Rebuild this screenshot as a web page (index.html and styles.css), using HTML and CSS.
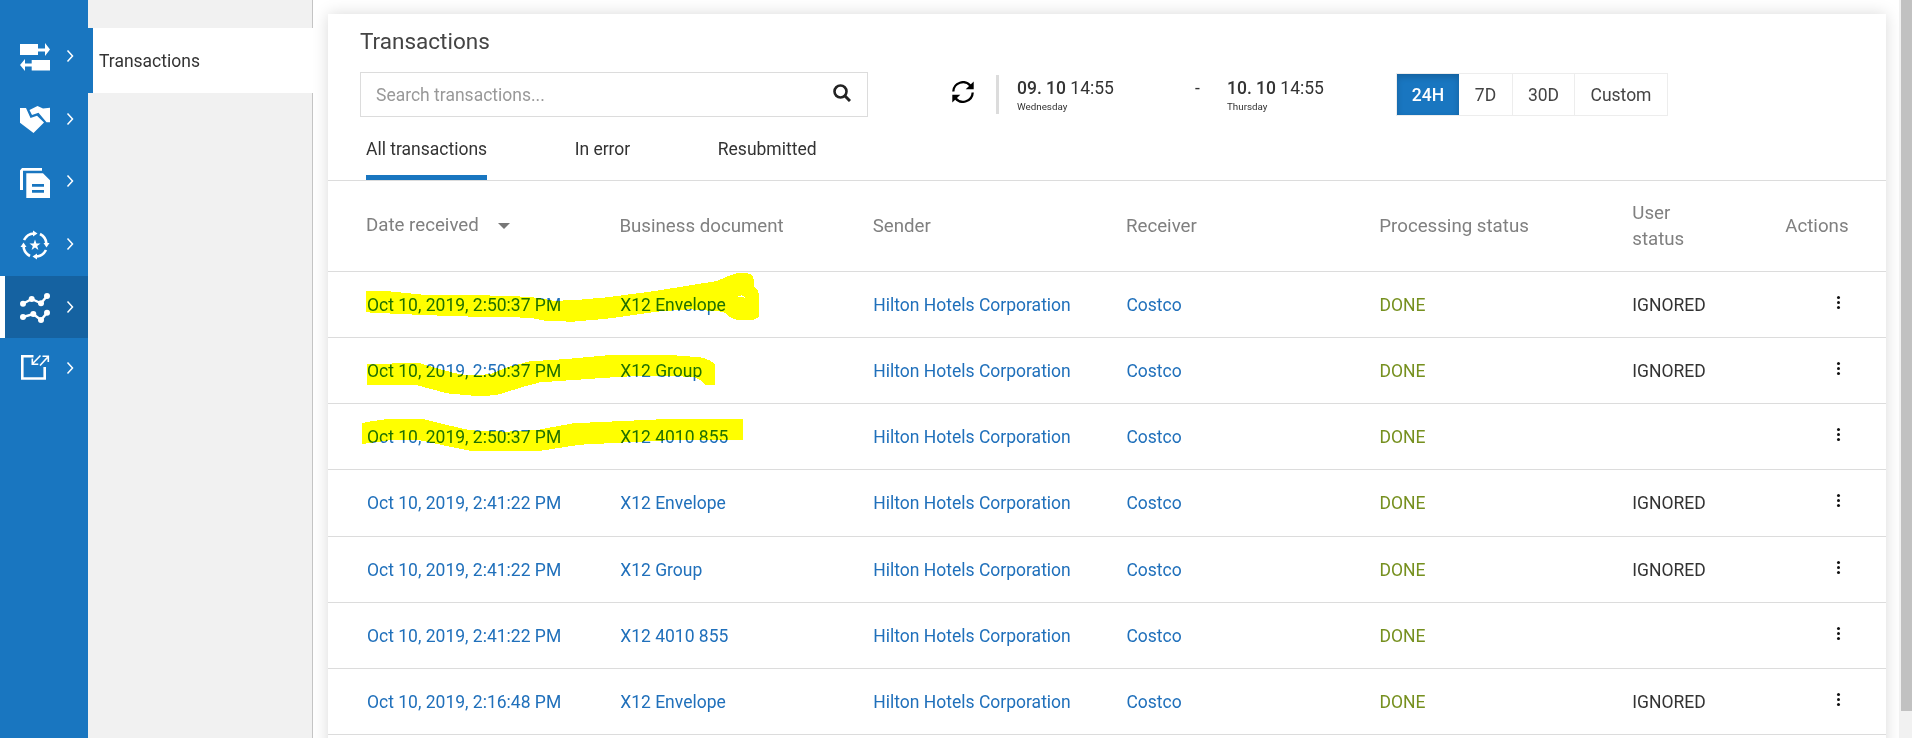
FILE: index.html
```
<!DOCTYPE html>
<html lang="en">
<head>
<meta charset="utf-8">
<title>Transactions</title>
<link rel="stylesheet" href="styles.css">
</head>
<body>
<div class="app">
  <nav class="rail">
    <a class="rail-item"><svg class="icon" viewBox="0 0 30 30"><path d="M0 2h18v4.500h7V1l5 6.500-5 6.500V9.500h-7V13H0zM30 28.500H11.700V24.500H5V29L0 23l5-6v4.500h6.700V18H30z"/></svg><svg class="chev" viewBox="0 0 8 14"><path d="M1.500 1.500 6.500 7l-5 5.500"/></svg></a>
    <a class="rail-item"><svg class="icon" viewBox="0 0 30 30"><path d="M0 3h6l4.500 10 6.500-2.300 7 6.800L13.500 28 0 17.700zM9.500 5l8-4L23 3.500l7-.8v14.600h-3.500l-8-9.600L12 10z"/></svg><svg class="chev" viewBox="0 0 8 14"><path d="M1.500 1.500 6.500 7l-5 5.500"/></svg></a>
    <a class="rail-item"><svg class="icon" viewBox="0 0 30 30"><path d="M0 22V2.500L2 0h20v2.700H3V22zM6.300 5.300H23l7 7V30H6.300zM12 16v2.700h12V16zm0 6v2.700h12V22z" fill-rule="evenodd"/></svg><svg class="chev" viewBox="0 0 8 14"><path d="M1.500 1.500 6.500 7l-5 5.500"/></svg></a>
    <a class="rail-item"><svg class="icon" viewBox="0 0 30 30"><g id="arm"><path d="M4 10A12 12 0 0 1 14 3.500" fill="none" stroke="#fff" stroke-width="2.600"/><path d="M13 .5 17.500 3.500 13 6.500z"/></g><use href="#arm" transform="rotate(90 15 15)"/><use href="#arm" transform="rotate(180 15 15)"/><use href="#arm" transform="rotate(270 15 15)"/><path d="m15 9.500 1.400 4h4.100l-3.300 2.400 1.200 4-3.400-2.400-3.400 2.400 1.200-4-3.300-2.400h4.100z"/></svg><svg class="chev" viewBox="0 0 8 14"><path d="M1.500 1.500 6.500 7l-5 5.500"/></svg></a>
    <a class="rail-item active"><svg class="icon" viewBox="0 0 30 30"><path d="M3 10.700 11.700 6 21 10.300 27 3M3 24l10.300-3L21 27l6-7.300" fill="none" stroke="#fff" stroke-width="2.400"/><circle cx="3" cy="10.700" r="3"/><circle cx="11.700" cy="6" r="3"/><circle cx="21" cy="10.300" r="3"/><circle cx="27" cy="3" r="3"/><circle cx="3" cy="24" r="3"/><circle cx="13.300" cy="21" r="3"/><circle cx="21" cy="27" r="3"/><circle cx="27" cy="19.700" r="3"/></svg><svg class="chev" viewBox="0 0 8 14"><path d="M1.500 1.500 6.500 7l-5 5.500"/></svg></a>
    <a class="rail-item last"><svg class="icon" viewBox="0 0 30 30"><path d="M13.500 4.300H2.300v22.200h22.400V15" fill="none" stroke="#fff" stroke-width="2.600"/><path d="M20.500 3.500l-8 8.300M12.300 6.500v5.700h6M20 13.500 27.800 5M22.500 4.200h5.800v5.800" fill="none" stroke="#fff" stroke-width="1.600"/></svg><svg class="chev" viewBox="0 0 8 14"><path d="M1.500 1.500 6.500 7l-5 5.500"/></svg></a>
  </nav>
  <aside class="submenu"><a class="submenu-item">Transactions</a></aside>
  <main class="main">
    <section class="card">
      <header class="head">
        <h1 class="title">Transactions</h1>
        <div class="toolbar">
          <div class="search"><span>Search transactions...</span><svg class="search-icon" viewBox="0 0 18 18"><circle cx="7.500" cy="7.500" r="6" fill="none" stroke="#222" stroke-width="2.600"/><path d="m11.800 11.800 5.200 5.200" stroke="#222" stroke-width="3"/></svg></div>
          <svg class="refresh" viewBox="0 0 22 22"><path d="M1.300 10.500A9.700 9.700 0 0 1 18.500 4.800M20.700 11.500A9.700 9.700 0 0 1 3.500 17.200" fill="none" stroke="#000" stroke-width="2.300"/><path d="M21.700.5V8.300H13.700zM.3 21.500V13.700H8.300z"/></svg>
          <div class="date from"><div class="day"><b>09. 10</b> 14:55</div><div class="weekday">Wednesday</div></div>
          <span class="dash">-</span>
          <div class="date"><div class="day"><b>10. 10</b> 14:55</div><div class="weekday">Thursday</div></div>
          <div class="ranges"><span class="range on">24H</span><span class="range r7">7D</span><span class="range r30">30D</span><span class="range rc">Custom</span></div>
        </div>
        <div class="tabs"><span class="tab current">All transactions</span><span class="tab">In error</span><span class="tab">Resubmitted</span></div>
      </header>
      <div class="row labels"><span class="sorted">Date received<i class="caret"></i></span><span>Business document</span><span>Sender</span><span>Receiver</span><span>Processing status</span><span class="user">User status</span><span>Actions</span></div>
      <div class="row"><a>Oct 10, 2019, 2:50:37 PM</a><a>X12 Envelope</a><a>Hilton Hotels Corporation</a><a>Costco</a><em>DONE</em><span>IGNORED</span><i class="dots"></i></div>
      <div class="row"><a>Oct 10, 2019, 2:50:37 PM</a><a>X12 Group</a><a>Hilton Hotels Corporation</a><a>Costco</a><em>DONE</em><span>IGNORED</span><i class="dots"></i></div>
      <div class="row"><a>Oct 10, 2019, 2:50:37 PM</a><a>X12 4010 855</a><a>Hilton Hotels Corporation</a><a>Costco</a><em>DONE</em><span></span><i class="dots"></i></div>
      <div class="row tall"><a>Oct 10, 2019, 2:41:22 PM</a><a>X12 Envelope</a><a>Hilton Hotels Corporation</a><a>Costco</a><em>DONE</em><span>IGNORED</span><i class="dots"></i></div>
      <div class="row"><a>Oct 10, 2019, 2:41:22 PM</a><a>X12 Group</a><a>Hilton Hotels Corporation</a><a>Costco</a><em>DONE</em><span>IGNORED</span><i class="dots"></i></div>
      <div class="row"><a>Oct 10, 2019, 2:41:22 PM</a><a>X12 4010 855</a><a>Hilton Hotels Corporation</a><a>Costco</a><em>DONE</em><span></span><i class="dots"></i></div>
      <div class="row"><a>Oct 10, 2019, 2:16:48 PM</a><a>X12 Envelope</a><a>Hilton Hotels Corporation</a><a>Costco</a><em>DONE</em><span>IGNORED</span><i class="dots"></i></div>
    </section>
  </main>
  <div class="scrollbar"><div class="thumb"></div></div>
  <svg class="marker" viewBox="0 0 1912 738" fill="#ff0" shape-rendering="crispEdges">
    <path fill-rule="evenodd" d="M366 291L391 291.500 423 294.700 467 295 513 296 537 297.700 553 300.700 573 300.300 607 297.300 653 291.300 717 281 731 275 737 273.300H748Q753.700 275 753.700 280V286.700Q758.700 290 758.700 294V317L754 319.700H737Q731 319 727 314.500L723 311.700 690 309.300 660 311.300 607 318.700 573 321.700 547 321 530 317.700 457 316.300 400 314 366 312.300zM738 296.500L742 295.300 745 297.700z"/>
    <path d="M367 363.700L420 363.300 437 368.300 453 372.700 467 375.300 490 374.300 507 367.300 530 361.300 567 359 610 355H670L700 357.300Q709 359 715 364V384.700H705L700 380 693 376.700 640 375.700 607 377.700 540 382.300 520 387.700 500 394.300Q486 396.500 473 395.700L447 393.300 417 385.300 367 384.700z"/>
    <path d="M362 423L367 422 387 419H423L443 424 470 430.300 507 431.700 537 430 573 423.300 660 419.300H743V440H673L580 444.700 537 451.300H473L450 446.700 420 440.300H390L362 444z"/>
  </svg>
</div>
</body>
</html>
```
FILE: styles.css
```
* { box-sizing: border-box; }
body { margin: 0; font-family: Roboto, "Liberation Sans", sans-serif; font-size: 17.5px; color: #333; background: #fff; overflow: hidden; }
.app { position: relative; display: flex; width: 1912px; height: 738px; overflow: hidden; }

.rail { width: 88px; flex: none; padding-top: 25px; background: #1976c0; }
.rail-item { display: flex; align-items: center; height: 62.7px; padding-left: 20px; }
.rail-item.active { background: #1562a1; border-left: 5px solid #fff; padding-left: 15px; }
.icon { width: 30px; height: 30px; fill: #fff; margin-top: 2px; }
.chev { width: 8px; height: 14px; margin: -1px 0 0 16px; fill: none; stroke: #fff; stroke-width: 1.5; }
.last { height: 58px; }
.last .icon { margin-top: 0; }
.last .chev { margin-top: 1px; }

.submenu { width: 225px; flex: none; padding-top: 28px; background: linear-gradient(#c4c4c4, #c4c4c4) right / 1px 100% no-repeat #f1f1f1; }
.submenu-item { display: flex; align-items: center; height: 65px; padding-left: 6px; background: #fff; border-left: 5px solid #1976c0; }

.main { flex: 1; padding: 14px 13px 0 15px; background: #fff; }
.card { height: 760px; background: #fff; box-shadow: 0 0 15px rgba(0, 0, 0, .15); }
.head { height: 167px; border-bottom: 1px solid #dcdcdc; padding: 14px 0 0 32px; }
.title { margin: 0; height: 44px; font-size: 22.5px; font-weight: 400; line-height: 27px; color: #444; }
.toolbar { display: flex; }
.search { display: flex; align-items: center; justify-content: space-between; width: 508px; height: 45px; padding: 0 16px 0 15px; border: 1px solid #dcdcdc; color: #999; }
.search-icon { width: 18px; height: 18px; margin-top: -4px; }
.refresh { width: 22px; height: 22px; margin: 9px 0 0 84px; }
.date { width: 100px; white-space: nowrap; }
.from { width: 199px; height: 39px; margin: 3px 0 0 22px; padding-left: 18px; border-left: 3px solid #dcdcdc; }
.date:not(.from) { padding-top: 3px; margin-left: 28px; }
.day { height: 25px; line-height: 26px; }
.day b { font-weight: 500; }
.weekday { font-size: 9.8px; line-height: 14px; }
.dash { width: 4px; padding-top: 6px; }
.ranges { display: flex; height: 43px; margin: 1px 0 0 69px; border: 1px solid #ededed; }
.range { display: flex; align-items: center; justify-content: center; border-right: 1px solid #ededed; color: #444; }
.on { width: 62px; background: #1976c0; color: #fff; font-weight: 500; border: 0; box-shadow: inset 0 3px 6px rgba(0, 0, 0, .18); }
.r7 { width: 54px; }
.r30 { width: 62px; }
.rc { width: 92px; border: 0; }
.tabs { display: flex; gap: 87.5px; height: 63px; padding-left: 6px; }
.tab { padding-top: 22px; color: #333; }
.current { border-bottom: 5px solid #1976c0; }

.row { display: grid; grid-template-columns: 253.2px 253.1px 253.1px 253.1px 252.9px 153px 60px; align-items: center; height: 66px; padding: 0 0 0 39px; border-bottom: 1px solid #dcdcdc; white-space: nowrap; }
.tall { height: 67px; }
.labels { grid-template-columns: 253.4px 253.3px 253.3px 253.3px 253px 153px 60px; height: 91px; padding-left: 38px; color: #808080; font-size: 18.7px; }
.row a { color: #2070bb; }
.row em { font-style: normal; color: #76901f; }
.sorted { padding-bottom: 2px; }
.user { width: 70px; white-space: normal; line-height: 26.400px; }
.caret { display: inline-block; margin: 0 0 2px 19px; border: 6px solid transparent; border-top-color: #777; border-bottom: 0; }
.dots { width: 3px; height: 3px; margin: -5px 0 0 52px; border-radius: 50%; background: #111; box-shadow: 0 -5px #111, 0 5px #111; }

.scrollbar { width: 13px; flex: none; padding-left: 2px; background: #f1f1f1; }
.thumb { height: 711px; background: #c1c1c1; }
.marker { position: absolute; left: 0; top: 0; width: 1912px; height: 738px; mix-blend-mode: multiply; pointer-events: none; }
```
